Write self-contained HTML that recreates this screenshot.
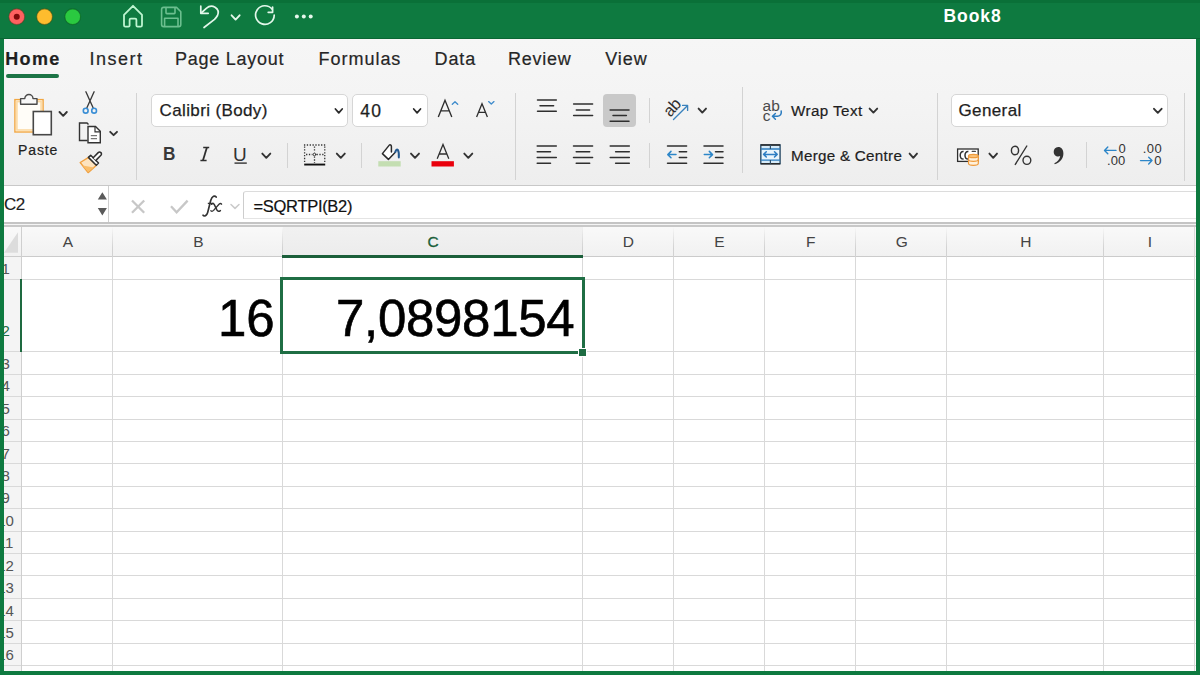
<!DOCTYPE html>
<html><head><meta charset="utf-8">
<style>
*{margin:0;padding:0;box-sizing:border-box}
html,body{width:1200px;height:675px;overflow:hidden;background:#0e7a40;font-family:"Liberation Sans",sans-serif}
.a{position:absolute}
#top{left:0;top:0;width:1200px;height:3px;background:#0a7038}
#win{left:4px;top:39px;width:1192px;height:632px;background:#fff;overflow:hidden}
#ribbon{left:4px;top:39px;width:1192px;height:147px;background:linear-gradient(#f6f6f6 0%,#f4f4f4 40%,#eeeeee 100%);border-bottom:1px solid #cbcbcb}
.tab{top:49.2px;font-size:18px;letter-spacing:0.55px;-webkit-text-stroke:0.2px #262626;color:#262626;white-space:nowrap}
.sep{background:#d3d3d3;width:1px}
.box{background:#fff;border:1px solid #d6d6d6;border-radius:5px}
.t{white-space:nowrap;color:#222}
svg{position:absolute;overflow:visible}
.gl{background:#d9d9d9}
.rn{font-size:15px;color:#444;white-space:nowrap}
.ch{font-size:15px;color:#444;text-align:center;top:8px}
</style></head><body>
<div id="top" class="a"></div>
<div class="a" style="left:0;top:37.5px;width:1200px;height:1.5px;background:#0a6634"></div>
<!-- traffic lights -->
<svg style="left:0;top:0" width="1200" height="39">
  <circle cx="16.75" cy="16.75" r="7.9" fill="#fe6160" stroke="#5a3a20" stroke-opacity="0.55" stroke-width="1.1"/>
  <circle cx="16.75" cy="16.75" r="3" fill="#7e0a0a"/>
  <circle cx="44.55" cy="16.75" r="7.9" fill="#febc2e" stroke="#3f4a10" stroke-opacity="0.55" stroke-width="1.1"/>
  <circle cx="72.7" cy="16.75" r="7.9" fill="#2ac940" stroke="#0a5a20" stroke-opacity="0.6" stroke-width="1.1"/>
  <!-- home -->
  <path d="M124 14.8 L133 5.8 L142 14.8 V25.2 Q142 26.6 140.6 26.6 H137.6 Q136.4 26.6 136.4 25.4 V19.8 Q136.4 18.6 135.2 18.6 H130.8 Q129.6 18.6 129.6 19.8 V25.4 Q129.6 26.6 128.4 26.6 H125.4 Q124 26.6 124 25.2 Z" fill="none" stroke="#bdf5d0" stroke-width="1.8" stroke-linejoin="round"/>
  <!-- save -->
  <g fill="none" stroke="#6cbf8f" stroke-width="1.6" stroke-linejoin="round">
    <path d="M161.6 9.5 Q161.6 7.4 163.7 7.4 H176.5 L180.8 11.7 V24.5 Q180.8 26.6 178.7 26.6 H163.7 Q161.6 26.6 161.6 24.5 Z"/>
    <path d="M166 7.4 V12.8 Q166 13.6 166.8 13.6 H174.2 Q175 13.6 175 12.8 V7.4"/>
    <path d="M164.6 26.6 V18.3 H178 V26.6"/>
  </g>
  <!-- undo -->
  <g fill="none" stroke="#e3f7ea" stroke-width="1.7" stroke-linecap="round" stroke-linejoin="round">
    <path d="M200.8 6.2 V13.3 H208.2"/>
    <path d="M201.2 13 L206.3 8.3 Q210.5 4.8 215 7.2 Q219.8 10.2 217.5 15.5 Q216.5 17.3 214.5 19.3 L204 27.5"/>
    <path d="M231.6 15.3 L235.6 19.6 L239.6 15.3" stroke-width="1.9"/>
    <path d="M272.2 9.3 A9.3 9.3 0 1 0 274.2 15.2"/>
    <path d="M272.6 7 V12.3 H268.2"/>
  </g>
  <circle cx="296.9" cy="16.6" r="2" fill="#e6f7ec"/>
  <circle cx="303.8" cy="16.6" r="2" fill="#e6f7ec"/>
  <circle cx="310.7" cy="16.6" r="2" fill="#e6f7ec"/>
</svg>
<div class="a" style="left:943.5px;top:6.3px;font-size:17.5px;font-weight:bold;color:#fff;letter-spacing:0.95px">Book8</div>

<div id="win" class="a"></div>
<div id="ribbon" class="a"></div>
<div class="a tab" style="left:5.2px;font-weight:bold;color:#1f1f1f;letter-spacing:1.35px">Home</div>
<div class="a" style="left:6px;top:74px;width:53px;height:4px;border-radius:2px;background:#1c7446"></div>
<div class="a tab" style="left:89.5px;letter-spacing:1.5px">Insert</div>
<div class="a tab" style="left:175px;letter-spacing:0.75px">Page Layout</div>
<div class="a tab" style="left:318.5px;letter-spacing:0.98px">Formulas</div>
<div class="a tab" style="left:434.5px;letter-spacing:0.88px">Data</div>
<div class="a tab" style="left:508px;letter-spacing:0.75px">Review</div>
<div class="a tab" style="left:605.3px;letter-spacing:0.88px">View</div>
<svg style="left:0;top:0" width="1200" height="675">
 <g fill="none" stroke-linecap="round" stroke-linejoin="round">
  <!-- paste -->
  <rect x="14.9" y="99.6" width="28.2" height="32.4" fill="#fffdf8" stroke="#f2a742" stroke-width="1.4" stroke-linejoin="miter"/>
  <rect x="16.9" y="101.6" width="24.2" height="28.4" fill="none" stroke="#fcd9a2" stroke-width="1.6" stroke-linejoin="miter"/>
  <path d="M20.6 104.2 V98.6 H24.8 A4.1 4.1 0 0 1 33 98.6 H37 V104.2 Z" fill="#f7f7f7" stroke="#4a4a4a" stroke-width="1.4" stroke-linejoin="round"/>
  <rect x="33.3" y="111.5" width="18" height="23.2" fill="#fff" stroke="#474747" stroke-width="1.6" stroke-linejoin="miter"/>
  <path d="M59.5 112 L63.2 115.8 L66.8 112" stroke="#333" stroke-width="1.9"/>
  <!-- scissors -->
  <path d="M85.9 91.8 L93.2 108 M94.1 91.8 L86.8 108" stroke="#3a3a3a" stroke-width="1.35"/>
  <circle cx="85.7" cy="110.7" r="2.4" stroke="#3a8ed5" stroke-width="1.6"/>
  <circle cx="94.1" cy="110.7" r="2.4" stroke="#3a8ed5" stroke-width="1.6"/>
  <!-- copy -->
  <path d="M87.5 140.5 H79.5 V123 H87 L88.5 124.5" stroke="#333" stroke-width="1.4" stroke-linejoin="miter" stroke-linecap="butt"/>
  <path d="M88 126.5 H95.5 L100.3 131.3 V142.8 H88 Z" fill="#fff" stroke="#333" stroke-width="1.4" stroke-linejoin="miter"/>
  <path d="M95 126.5 V131.8 H100.3" stroke="#333" stroke-width="1.2" stroke-linejoin="miter"/>
  <path d="M90.8 135.7 H97 M90.8 138.7 H97" stroke="#555" stroke-width="1" stroke-linecap="butt"/>
  <path d="M110.2 131.8 L113.6 135.2 L117 131.8" stroke="#333" stroke-width="1.9"/>
  <!-- format painter -->
  <path d="M80.2 162.5 L88.6 157.3 L96.5 165.2 L88.1 172.6 Z" fill="#fde3bf" stroke="#f0a040" stroke-width="1.4" stroke-linejoin="round"/>
  <path d="M82.6 165.6 L94 167.4 L88.2 172 Z" fill="#f9bd6a" stroke="none"/>
  <path d="M88.4 157.4 L90.7 155.2 L98.5 163 L96.3 165.3 Z" fill="#fff" stroke="#303030" stroke-width="1.5" stroke-linejoin="round"/>
  <path d="M93.2 157.7 L98.2 152.6 A1.9 1.9 0 0 1 100.9 155.3 L95.9 160.4" fill="#fff" stroke="#303030" stroke-width="1.5" stroke-linejoin="round"/>
 </g>
</svg>
<div class="a t" style="left:18px;top:142px;font-size:14px;color:#222;letter-spacing:0.9px;-webkit-text-stroke:0.2px #222">Paste</div>
<div class="a sep" style="left:136px;top:93px;height:87px"></div>
<div class="a box" style="left:151.2px;top:94px;width:197px;height:33.4px"></div>
<div class="a box" style="left:352.3px;top:94px;width:75.3px;height:33.4px"></div>
<div class="a t" style="left:159.5px;top:100.8px;font-size:17px;color:#1e1e1e;letter-spacing:0.38px;-webkit-text-stroke:0.25px #1e1e1e">Calibri (Body)</div>
<div class="a t" style="left:360.3px;top:100.6px;font-size:17.5px;color:#1e1e1e;letter-spacing:1.2px;-webkit-text-stroke:0.25px #1e1e1e">40</div>
<svg style="left:0;top:0" width="1200" height="675">
 <g fill="none" stroke-linecap="round" stroke-linejoin="round">
  <path d="M335.4 109 L338.8 112.8 L342.2 109" stroke="#2a2a2a" stroke-width="1.75"/>
  <path d="M413.7 109 L417.1 112.8 L420.5 109" stroke="#2a2a2a" stroke-width="1.75"/>
  <!-- grow font -->
  <path d="M438.3 117 L445 100.3 L451.8 117 M440.8 110.8 H449.2" stroke="#2e2e2e" stroke-width="1.35" stroke-linecap="butt" stroke-linejoin="miter"/>
  <path d="M452.3 104.3 L455 101.8 L457.7 104.3" stroke="#3f8ccc" stroke-width="1.35"/>
  <!-- shrink font -->
  <path d="M476.6 117 L482 103.8 L487.4 117 M478.6 112.4 H485.4" stroke="#2e2e2e" stroke-width="1.3" stroke-linecap="butt" stroke-linejoin="miter"/>
  <path d="M488.6 101.6 L491.3 104.1 L494 101.6" stroke="#3f8ccc" stroke-width="1.35"/>
  <!-- BIU -->
  <path d="M262.3 153.6 L266.3 157.8 L270.3 153.6" stroke="#333" stroke-width="1.9"/>
  <path d="M234.5 163.1 H246.8" stroke="#333" stroke-width="1.4" stroke-linecap="butt"/>
  <path d="M203.2 147.5 H209.2 M200.4 160.4 H206.6" stroke="#2e2e2e" stroke-width="1.5" stroke-linecap="butt"/>
  <path d="M206.9 147.6 L203 160.3" stroke="#2e2e2e" stroke-width="1.8" stroke-linecap="butt"/>
  <!-- borders -->
  <rect x="304.2" y="163.6" width="21" height="1.9" fill="#111" stroke="none"/>
  <g stroke="#333" stroke-width="1.3" stroke-dasharray="1.3 1.55" stroke-linecap="butt">
   <path d="M303.95 145 H326 M304.6 146.45 V163 M324.75 146.45 V163 M314.5 146.45 V152.5 M314.5 156.5 V163 M306.05 154.5 H312.5 M316.5 154.5 H324"/>
  </g>
  <circle cx="314.5" cy="154.5" r="1.3" fill="#fff" stroke="#333" stroke-width="1"/>
  <path d="M336.8 153.6 L340.8 157.8 L344.8 153.6" stroke="#333" stroke-width="1.9"/>
  <!-- fill bucket -->
  <path d="M391.4 152 V146.6 Q391.2 144.4 389.5 144.9 L382.4 153.6 L388.4 159.4 L395.3 152.3" fill="#fff" stroke="#2a2a2a" stroke-width="1.5"/>
  <path d="M395.3 152.1 Q396.4 148.4 397.9 150 Q399.2 152.3 398.8 157.4" stroke="#24598f" stroke-width="2"/>
  <rect x="378.3" y="161.2" width="22.4" height="5.3" fill="#c4deb2" stroke="none"/>
  <path d="M411 153.6 L415 157.8 L419 153.6" stroke="#333" stroke-width="1.9"/>
  <!-- font color -->
  <path d="M437.2 158.8 L443 144.5 L448.8 158.8 M439.3 154 H446.7" stroke="#2e2e2e" stroke-width="1.3" stroke-linecap="butt" stroke-linejoin="miter"/>
  <rect x="431.5" y="161.2" width="22.4" height="5.3" fill="#e9000c" stroke="none"/>
  <path d="M464.3 153.6 L468.3 157.8 L472.3 153.6" stroke="#333" stroke-width="1.9"/>
 </g>
</svg>
<div class="a t" style="left:163px;top:143.1px;font-size:18.5px;font-weight:bold;color:#383838;transform:scaleX(0.93);transform-origin:0 0">B</div>

<div class="a t" style="left:233px;top:144px;font-size:19px;color:#333">U</div>
<div class="a sep" style="left:286.5px;top:143px;height:25px"></div>
<div class="a sep" style="left:360.5px;top:143px;height:25px"></div>
<div class="a sep" style="left:515px;top:93px;height:87px"></div>
<div class="a" style="left:603px;top:94px;width:33.4px;height:33.3px;border-radius:4px;background:#c9c9c9"></div>
<svg style="left:0;top:0" width="1200" height="675">
 <g fill="none" stroke="#2f2f2f" stroke-width="1.5" stroke-linecap="round">
  <path d="M537.5 100.1 H556.3 M540 105.8 H553.6 M537.5 111.3 H556.3"/>
  <path d="M573.6 104.1 H592.6 M576.3 109.9 H589.6 M573.6 115.6 H592.6"/>
  <path d="M610.1 109.9 H629 M613 115.6 H626.4 M610.1 121.2 H629"/>
  <path d="M537.2 146 H556.3 M537.2 151.7 H550.5 M537.2 157.5 H556.3 M537.2 163.3 H550.5"/>
  <path d="M573.5 146 H592.6 M576.2 151.7 H589.7 M573.5 157.5 H592.6 M576.2 163.3 H589.7"/>
  <path d="M610.2 146 H629.3 M615.6 151.7 H629.3 M610.2 157.5 H629.3 M615.6 163.3 H629.3"/>
  <path d="M667.5 146 H686.6 M679.3 151.7 H686.6 M679.3 157.5 H686.6 M667.5 163.3 H686.6"/>
  <path d="M704 146 H723 M715.5 151.7 H723 M715.5 157.5 H723 M704 163.3 H723"/>
 </g>
 <g fill="none" stroke="#2d86c8" stroke-width="1.5" stroke-linecap="round" stroke-linejoin="round">
  <path d="M667.8 154.6 H676 M671 151.4 L667.8 154.6 L671 157.8"/>
  <path d="M704.3 154.6 H712.5 M709.3 151.4 L712.5 154.6 L709.3 157.8"/>
  <path d="M673.5 119.5 L687.6 105.4 M682.6 105.4 H687.6 V110.4" stroke="#3a82bd" stroke-width="1.35"/>
 </g>
 <g fill="none" stroke="#333" stroke-width="1.9" stroke-linecap="round" stroke-linejoin="round">
  <path d="M698.6 108.6 L702.3 112.6 L706 108.6"/>
 </g>
</svg>
<div class="a t" style="left:661px;top:98px;font-size:16.5px;color:#2e2e2e;transform:rotate(-48deg);transform-origin:50% 50%;width:22px;text-align:center;letter-spacing:-0.3px">ab</div>
<div class="a sep" style="left:648.5px;top:98px;height:25px"></div>
<div class="a sep" style="left:648.5px;top:143px;height:25px"></div>
<div class="a sep" style="left:742px;top:87px;height:86px"></div>
<svg style="left:0;top:0" width="1200" height="675">
 <g fill="none" stroke-linecap="round" stroke-linejoin="round">
  <path d="M781.2 111 Q782 115.5 777.5 116.3 H772.8 M775.4 113.5 L772.4 116.3 L775.4 119.2" stroke="#2b7cc0" stroke-width="1.5"/>
  <rect x="760.8" y="144.9" width="19.3" height="18.8" fill="#d6ebf9" stroke="#2f4f6a" stroke-width="1.4" stroke-linecap="butt" stroke-linejoin="miter"/>
  <path d="M760.8 144.9 H780.1 M760.8 163.7 H780.1" stroke="#2a2a2a" stroke-width="1.5" stroke-linecap="butt"/>
  <rect x="762" y="149.6" width="17" height="10" fill="#eaf5fc" stroke="none"/>
  <path d="M761 149 H780 M761 160.1 H780" stroke="#2f7fc0" stroke-width="1.4" stroke-linecap="butt"/>
  <path d="M770.4 145 V149 M770.4 160.1 V163.7" stroke="#2f4f6a" stroke-width="1.2" stroke-linecap="butt"/>
  <path d="M763.6 154.4 H777.2 M766.3 151.8 L763.6 154.4 L766.3 157 M774.5 151.8 L777.2 154.4 L774.5 157" stroke="#2e7ec3" stroke-width="1.5"/>
  <path d="M869.6 108.6 L873.4 112.6 L877.2 108.6" stroke="#333" stroke-width="1.9"/>
  <path d="M909.6 153.6 L913.3 157.8 L917 153.6" stroke="#333" stroke-width="1.9"/>
 </g>
</svg>
<div class="a t" style="left:762.5px;top:96.5px;font-size:15.5px;color:#4a4a4a;letter-spacing:0.2px">ab</div>
<div class="a t" style="left:762.7px;top:106.5px;font-size:15.5px;color:#4a4a4a">c</div>
<div class="a t" style="left:791px;top:102px;font-size:15.2px;color:#1e1e1e;letter-spacing:0.42px;-webkit-text-stroke:0.2px #1e1e1e">Wrap Text</div>
<div class="a t" style="left:791px;top:146.5px;font-size:15.2px;color:#1e1e1e;letter-spacing:0.28px;-webkit-text-stroke:0.2px #1e1e1e">Merge &amp; Centre</div>
<div class="a sep" style="left:937px;top:93px;height:87px"></div>
<div class="a box" style="left:951px;top:94px;width:217px;height:33px"></div>
<div class="a t" style="left:958.5px;top:100.6px;font-size:17px;color:#1e1e1e;letter-spacing:0.38px;-webkit-text-stroke:0.25px #1e1e1e">General</div>
<svg style="left:0;top:0" width="1200" height="675">
 <g fill="none" stroke-linecap="round" stroke-linejoin="round">
  <path d="M1154 108.8 L1157.8 112.8 L1161.6 108.8" stroke="#333" stroke-width="1.9"/>
  <!-- accounting -->
  <rect x="957.6" y="149" width="20.6" height="12.4" fill="#fff" stroke="#2e2e2e" stroke-width="1.3" stroke-linejoin="miter"/>
  <path d="M963.6 151.6 Q960.2 151.3 960.2 155.35 Q960.2 159.4 963.6 159.1 M968.4 151.6 Q965 151.3 965 155.35 Q965 159.4 968.4 159.1" stroke="#333" stroke-width="1.5" stroke-linecap="butt"/>
  <path d="M972.2 151.4 H975.4" stroke="#444" stroke-width="1.2"/>
  <g stroke="#ef9b3c" stroke-width="1.2">
   <path d="M968.5 156 V163.6 Q968.5 165.4 973.4 165.4 Q978.3 165.4 978.3 163.6 V156" fill="#fff1dc"/>
   <ellipse cx="973.4" cy="156" rx="4.9" ry="1.7" fill="#f9c27a"/>
   <path d="M968.5 159.6 Q968.5 161.4 973.4 161.4 Q978.3 161.4 978.3 159.6" fill="none"/>
  </g>
  <path d="M989.4 153.6 L993.2 157.8 L997 153.6" stroke="#333" stroke-width="1.9"/>
  <ellipse cx="1015" cy="150.5" rx="3.6" ry="4.3" stroke="#333" stroke-width="1.4"/>
  <ellipse cx="1026.9" cy="160.3" rx="3.9" ry="4.1" stroke="#333" stroke-width="1.4"/>
  <path d="M1026.8 146 L1015.3 164.4" stroke="#333" stroke-width="1.4"/>
  <path d="M1058.2 147 C1055.3 147 1053.7 149.2 1053.7 151.8 C1053.7 154.5 1055.6 156.6 1058.3 156.6 C1059.2 156.6 1059.8 156.4 1060.2 156.1 C1059.8 159.3 1057.6 161.8 1054.3 163.3 L1054.8 164.2 C1060.4 162.4 1063.4 158.5 1063.4 153.5 C1063.4 149.6 1061.4 147 1058.2 147 Z" fill="#333" stroke="none"/>
  <!-- inc/dec decimal arrows -->
  <path d="M1104.5 150.4 H1116 M1107.8 147.1 L1104.5 150.4 L1107.8 153.7" stroke="#2d86c8" stroke-width="1.4"/>
  <path d="M1140.5 160.6 H1152 M1148.7 157.3 L1152 160.6 L1148.7 163.9" stroke="#2d86c8" stroke-width="1.4"/>
 </g>
</svg>


<div class="a t" style="left:1118.5px;top:140.9px;font-size:13px;color:#333">0</div>
<div class="a t" style="left:1107px;top:152.6px;font-size:13px;color:#333;letter-spacing:0.1px">.00</div>
<div class="a t" style="left:1142.7px;top:140.9px;font-size:13px;color:#333;letter-spacing:0.5px">.00</div>
<div class="a t" style="left:1154.3px;top:152.6px;font-size:13px;color:#333">0</div>
<div class="a sep" style="left:1086px;top:142px;height:26px"></div>
<div class="a sep" style="left:1183.5px;top:93px;height:88px"></div>
<!--RIBBON-->
<div class="a" style="left:4px;top:185px;width:1192px;height:1px;background:#c8c8c8"></div>
<div class="a" style="left:4px;top:186px;width:1192px;height:37px;background:#fff"></div>
<div class="a" style="left:108px;top:186px;width:1px;height:37px;background:#cfcfcf"></div>
<div class="a" style="left:243px;top:191px;width:953px;height:28.3px;background:#fff;border-left:1px solid #cdcdcd;border-top:1px solid #dcdcdc;border-bottom:1px solid #e4e4e4;border-top-left-radius:3px"></div>
<div class="a" style="left:4px;top:222px;width:1192px;height:1.5px;background:#c4c4c4"></div>
<div class="a" style="left:4px;top:223.5px;width:1192px;height:1.5px;background:#f4f4f4"></div>
<div class="a" style="left:4px;top:225px;width:1192px;height:1.5px;background:#c8c8c8"></div>
<div class="a t" style="left:4px;top:194.5px;font-size:17px;color:#1e1e1e;letter-spacing:-0.6px;-webkit-text-stroke:0.15px #1e1e1e">C2</div>
<div class="a t" style="left:253.5px;top:196.5px;font-size:16.5px;color:#111;letter-spacing:-0.3px;-webkit-text-stroke:0.2px #111">=SQRTPI(B2)</div>
<svg style="left:0;top:0" width="1200" height="675">
 <path d="M97.8 199.6 L102.35 192.2 L106.9 199.6 Z M97.8 208 L102.35 215.6 L106.9 208 Z" fill="#5a5a5a"/>
 <g fill="none" stroke-linecap="round" stroke-linejoin="round">
  <path d="M132 200.5 L144.2 212.7 M144.2 200.5 L132 212.7" stroke="#c7c7c7" stroke-width="2.3" stroke-linecap="butt"/>
  <path d="M171 206.3 L176.6 212.3 L187.6 200.6" stroke="#c7c7c7" stroke-width="2.3" stroke-linecap="butt" stroke-linejoin="miter"/>
  <path d="M231 204.5 L235 208.4 L239 204.5" stroke="#cacaca" stroke-width="1.5"/>
  <path d="M216.2 197 Q215.1 195.6 213.5 196.2 Q211.7 197 210.7 200.6 L207.7 212.4 Q206.8 215.9 204.5 216 Q203.4 216 203 215.2" stroke="#333" stroke-width="1.7" stroke-linecap="round"/>
  <path d="M207.8 203.4 H213.6" stroke="#333" stroke-width="1.3" stroke-linecap="butt"/>
  <path d="M211.6 204.2 Q213 202.8 214.2 204.4 L217 210.2 Q218.2 212.2 220.4 210.6" stroke="#333" stroke-width="1.5"/>
  <path d="M221.6 204.2 Q220.6 202.8 219 204.2 L213.6 210.4 Q212.2 211.8 210.8 210.8" stroke="#333" stroke-width="1.3"/>
 </g>
</svg>

<!--FORMULA-->
<div class="a" style="left:4px;top:226.5px;width:1192px;height:30px;background:linear-gradient(#f9f9f9,#f1f1f1)"></div>
<div class="a" style="left:282.5px;top:226.5px;width:300px;height:30px;background:linear-gradient(#f1f1f1,#ececec)"></div>
<div class="a" style="left:4px;top:257px;width:17.5px;height:414px;background:#f4f4f4"></div>
<svg style="left:0;top:0" width="1200" height="675"><path d="M4 252.7 L18 252.7 L18 232.3 Z" fill="#dcdcdc"/></svg>
<div class="a" style="left:4px;top:255.9px;width:1192px;height:1.6px;background:#cbcbcb"></div>
<div class="a gl" style="left:4px;top:278.60px;width:1192px;height:1px"></div>
<div class="a gl" style="left:4px;top:351.30px;width:1192px;height:1px"></div>
<div class="a gl" style="left:4px;top:373.71px;width:1192px;height:1px"></div>
<div class="a gl" style="left:4px;top:396.12px;width:1192px;height:1px"></div>
<div class="a gl" style="left:4px;top:418.53px;width:1192px;height:1px"></div>
<div class="a gl" style="left:4px;top:440.94px;width:1192px;height:1px"></div>
<div class="a gl" style="left:4px;top:463.35px;width:1192px;height:1px"></div>
<div class="a gl" style="left:4px;top:485.76px;width:1192px;height:1px"></div>
<div class="a gl" style="left:4px;top:508.17px;width:1192px;height:1px"></div>
<div class="a gl" style="left:4px;top:530.58px;width:1192px;height:1px"></div>
<div class="a gl" style="left:4px;top:552.99px;width:1192px;height:1px"></div>
<div class="a gl" style="left:4px;top:575.40px;width:1192px;height:1px"></div>
<div class="a gl" style="left:4px;top:597.81px;width:1192px;height:1px"></div>
<div class="a gl" style="left:4px;top:620.22px;width:1192px;height:1px"></div>
<div class="a gl" style="left:4px;top:642.63px;width:1192px;height:1px"></div>
<div class="a gl" style="left:4px;top:665.04px;width:1192px;height:1px"></div>
<div class="a" style="left:21.00px;top:226.5px;width:1px;height:445px;background:#cfcfcf"></div>
<div class="a gl" style="left:112.25px;top:257px;width:1px;height:414px"></div><div class="a" style="left:112.25px;top:226.5px;width:1px;height:30.5px;background:linear-gradient(rgba(210,210,210,0),#d2d2d2 70%)"></div>
<div class="a gl" style="left:282.00px;top:257px;width:1px;height:414px"></div><div class="a" style="left:282.00px;top:226.5px;width:1px;height:30.5px;background:linear-gradient(rgba(210,210,210,0),#d2d2d2 70%)"></div>
<div class="a gl" style="left:581.90px;top:257px;width:1px;height:414px"></div><div class="a" style="left:581.90px;top:226.5px;width:1px;height:30.5px;background:linear-gradient(rgba(210,210,210,0),#d2d2d2 70%)"></div>
<div class="a gl" style="left:672.50px;top:257px;width:1px;height:414px"></div><div class="a" style="left:672.50px;top:226.5px;width:1px;height:30.5px;background:linear-gradient(rgba(210,210,210,0),#d2d2d2 70%)"></div>
<div class="a gl" style="left:764.00px;top:257px;width:1px;height:414px"></div><div class="a" style="left:764.00px;top:226.5px;width:1px;height:30.5px;background:linear-gradient(rgba(210,210,210,0),#d2d2d2 70%)"></div>
<div class="a gl" style="left:855.00px;top:257px;width:1px;height:414px"></div><div class="a" style="left:855.00px;top:226.5px;width:1px;height:30.5px;background:linear-gradient(rgba(210,210,210,0),#d2d2d2 70%)"></div>
<div class="a gl" style="left:946.25px;top:257px;width:1px;height:414px"></div><div class="a" style="left:946.25px;top:226.5px;width:1px;height:30.5px;background:linear-gradient(rgba(210,210,210,0),#d2d2d2 70%)"></div>
<div class="a gl" style="left:1103.30px;top:257px;width:1px;height:414px"></div><div class="a" style="left:1103.30px;top:226.5px;width:1px;height:30.5px;background:linear-gradient(rgba(210,210,210,0),#d2d2d2 70%)"></div>
<div class="a gl" style="left:1194px;top:226.5px;width:1px;height:445px"></div>
<div class="a t" style="left:67.12px;top:233px;width:60px;margin-left:-29.3px;text-align:center;font-size:15.5px;color:#444">A</div>
<div class="a t" style="left:197.62px;top:233px;width:60px;margin-left:-29.3px;text-align:center;font-size:15.5px;color:#444">B</div>
<div class="a t" style="left:432.45px;top:233px;width:60px;margin-left:-29.3px;text-align:center;font-size:15.5px;color:#1b5f3a;-webkit-text-stroke:0.3px #1b5f3a">C</div>
<div class="a t" style="left:627.70px;top:233px;width:60px;margin-left:-29.3px;text-align:center;font-size:15.5px;color:#444">D</div>
<div class="a t" style="left:718.75px;top:233px;width:60px;margin-left:-29.3px;text-align:center;font-size:15.5px;color:#444">E</div>
<div class="a t" style="left:810.00px;top:233px;width:60px;margin-left:-29.3px;text-align:center;font-size:15.5px;color:#444">F</div>
<div class="a t" style="left:901.12px;top:233px;width:60px;margin-left:-29.3px;text-align:center;font-size:15.5px;color:#444">G</div>
<div class="a t" style="left:1025.28px;top:233px;width:60px;margin-left:-29.3px;text-align:center;font-size:15.5px;color:#444">H</div>
<div class="a t" style="left:1149.15px;top:233px;width:60px;margin-left:-29.3px;text-align:center;font-size:15.5px;color:#444">I</div>
<div class="a" style="left:282px;top:254.8px;width:300.5px;height:3px;background:#1b5f3a"></div>
<div class="a rn" style="left:-24.4px;width:60px;text-align:center;top:259.90px;color:#555">1</div>
<div class="a rn" style="left:-24.4px;width:60px;text-align:center;top:322.00px;color:#1d6b3f">2</div>
<div class="a rn" style="left:-24.4px;width:60px;text-align:center;top:355.01px;color:#555">3</div>
<div class="a rn" style="left:-24.4px;width:60px;text-align:center;top:377.42px;color:#555">4</div>
<div class="a rn" style="left:-24.4px;width:60px;text-align:center;top:399.83px;color:#555">5</div>
<div class="a rn" style="left:-24.4px;width:60px;text-align:center;top:422.24px;color:#555">6</div>
<div class="a rn" style="left:-24.4px;width:60px;text-align:center;top:444.65px;color:#555">7</div>
<div class="a rn" style="left:-24.4px;width:60px;text-align:center;top:467.06px;color:#555">8</div>
<div class="a rn" style="left:-24.4px;width:60px;text-align:center;top:489.47px;color:#555">9</div>
<div class="a rn" style="left:-24.4px;width:60px;text-align:center;top:511.88px;color:#555">10</div>
<div class="a rn" style="left:-24.4px;width:60px;text-align:center;top:534.29px;color:#555">11</div>
<div class="a rn" style="left:-24.4px;width:60px;text-align:center;top:556.70px;color:#555">12</div>
<div class="a rn" style="left:-24.4px;width:60px;text-align:center;top:579.11px;color:#555">13</div>
<div class="a rn" style="left:-24.4px;width:60px;text-align:center;top:601.52px;color:#555">14</div>
<div class="a rn" style="left:-24.4px;width:60px;text-align:center;top:623.93px;color:#555">15</div>
<div class="a rn" style="left:-24.4px;width:60px;text-align:center;top:646.34px;color:#555">16</div>
<div class="a" style="left:19.8px;top:279px;width:2.5px;height:73.2px;background:#1e6a40"></div>
<div class="a" style="left:279.9px;top:277px;width:304.7px;height:77px;border:3.1px solid #1f6e44"></div>
<div class="a" style="left:577.8px;top:347.8px;width:9.2px;height:9.2px;background:#1e6c43;border:1.2px solid #fff"></div>
<div id="c16" class="a t" style="left:218px;top:289px;font-size:51px;color:#000;-webkit-text-stroke:0.6px #000">16</div>
<div id="c7" class="a t" style="left:336px;top:289px;font-size:51px;color:#000;-webkit-text-stroke:0.6px #000;letter-spacing:-0.3px">7,0898154</div>

<!--GRID-->
<div class="a" style="left:0;top:39px;width:4px;height:636px;background:#0e7a40"></div>
<div class="a" style="left:1196px;top:39px;width:4px;height:636px;background:#0e7a40"></div>
<div class="a" style="left:0;top:671px;width:1200px;height:4px;background:#0e7a40"></div>
</body></html>
